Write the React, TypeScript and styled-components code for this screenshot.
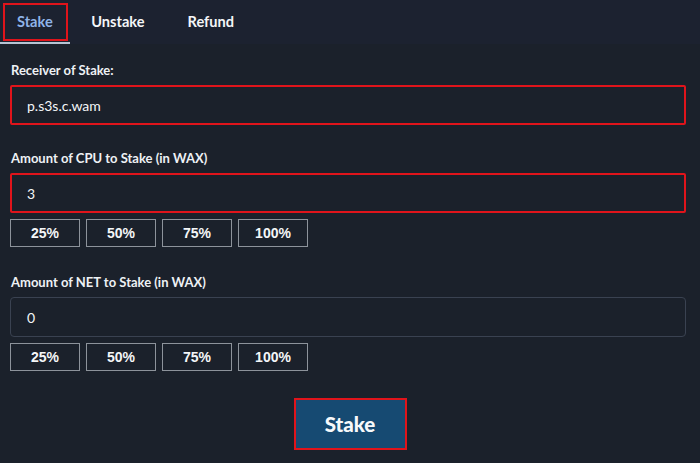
import React from 'react';
import styled, { createGlobalStyle, css } from 'styled-components';

const GlobalStyle = createGlobalStyle`
  html, body {
    margin: 0;
    padding: 0;
    background: #1b212b;
  }
  body {
    font-family: Lato, "Open Sans", "Liberation Sans", sans-serif;
    color: #f2f4f7;
  }
`;

const Page = styled.div`
  width: 700px;
  height: 463px;
  background: #1b212b;
  box-sizing: border-box;
  overflow: hidden;
`;

const TabBar = styled.div`
  display: flex;
  height: 44px;
  background: #1c2230;
  box-sizing: border-box;
`;

const Tab = styled.div<{ active?: boolean; marked?: boolean }>`
  position: relative;
  display: flex;
  align-items: center;
  justify-content: center;
  padding: 0 21.5px;
  font-size: 14.6px;
  font-weight: 700;
  color: #f4f6f8;
  box-sizing: border-box;
  border-bottom: 2px solid transparent;

  ${(props) => props.active && css`
    color: #8fb4e8;
    border-bottom-color: #b7c3d3;
    padding: 0 17px;
  `}

  ${(props) => props.marked && css`
    &:after {
      content: '';
      position: absolute;
      left: 3px;
      top: 3px;
      width: 65px;
      height: 38px;
      box-sizing: border-box;
      border: 2px solid #e0141b;
    }
  `}
`;

const Form = styled.div`
  display: flex;
  flex-direction: column;
  padding: 18px 14px 0 10px;
`;

const Field = styled.div`
  display: flex;
  flex-direction: column;
  margin-bottom: 25px;
`;

const Label = styled.div`
  font-size: 13px;
  font-weight: 700;
  color: #eef1f5;
  margin-bottom: 7px;
  padding-left: 1px;
`;

const Input = styled.div<{ marked?: boolean }>`
  height: 40px;
  display: flex;
  align-items: center;
  padding-left: 16px;
  font-size: 14px;
  color: #f4f6f8;
  box-sizing: border-box;
  border-radius: 4px;
  border: 1px solid #3a4251;

  ${(props) => props.marked && css`
    border: 2px solid #e0141b;
    border-radius: 2px;
    padding-left: 15px;
  `}
`;

const Percents = styled.div`
  display: flex;
  gap: 6px;
  margin-top: 6px;
  margin-bottom: 2px;
`;

const PercentButton = styled.div`
  width: 70px;
  height: 28px;
  display: flex;
  align-items: center;
  justify-content: center;
  box-sizing: border-box;
  border: 1.5px solid #8d939b;
  font-family: "Liberation Sans", Arial, sans-serif;
  font-size: 14px;
  font-weight: 700;
  color: #f4f6f8;
`;

const Footer = styled.div`
  display: flex;
  justify-content: center;
  margin-top: 0;
  padding-left: 4px;
`;

const StakeButton = styled.div`
  width: 113px;
  height: 52px;
  display: flex;
  align-items: center;
  justify-content: center;
  box-sizing: border-box;
  background: #164a72;
  border: 2px solid #e0141b;
  font-size: 20.5px;
  font-weight: 900;
  color: #f7f9fb;
`;

const PERCENTS = ['25%', '50%', '75%', '100%'];

export default function App(): JSX.Element {
  return (
    <Page>
      <GlobalStyle />
      <TabBar>
        <Tab active marked>Stake</Tab>
        <Tab>Unstake</Tab>
        <Tab>Refund</Tab>
      </TabBar>
      <Form>
        <Field>
          <Label>Receiver of Stake:</Label>
          <Input marked>p.s3s.c.wam</Input>
        </Field>
        <Field>
          <Label>Amount of CPU to Stake (in WAX)</Label>
          <Input marked>3</Input>
          <Percents>
            {PERCENTS.map((p) => <PercentButton key={p}>{p}</PercentButton>)}
          </Percents>
        </Field>
        <Field>
          <Label>Amount of NET to Stake (in WAX)</Label>
          <Input>0</Input>
          <Percents>
            {PERCENTS.map((p) => <PercentButton key={p}>{p}</PercentButton>)}
          </Percents>
        </Field>
        <Footer>
          <StakeButton>Stake</StakeButton>
        </Footer>
      </Form>
    </Page>
  );
}
